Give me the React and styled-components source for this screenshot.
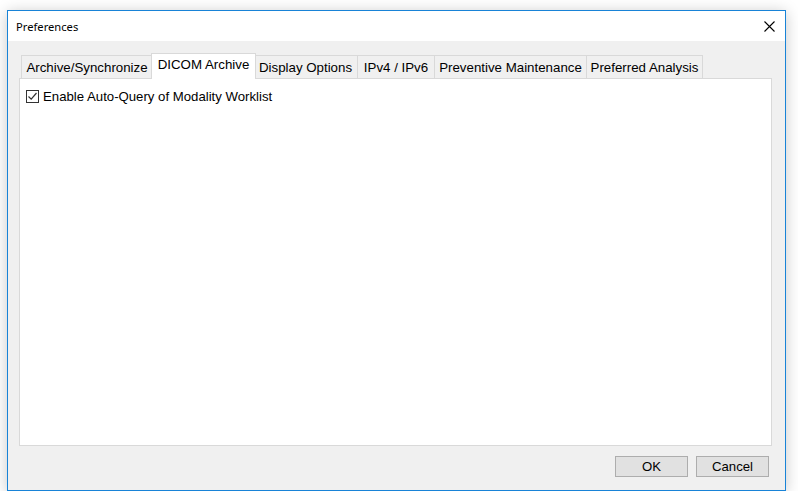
import React, { useState } from "react";
import styled, { createGlobalStyle } from "styled-components";

const GlobalStyle = createGlobalStyle`
  body {
    margin: 0;
    background: #ffffff;
    font-family: "Liberation Sans", Arial, sans-serif;
  }
`;

const Page = styled.div`
  padding: 10px 0 0 7px;
`;

const Window = styled.div`
  width: 779px;
  height: 481px;
  box-sizing: border-box;
  border: 1px solid #1883d7;
  background: #f0f0f0;
  box-shadow: 0 2px 14px rgba(0, 0, 0, 0.22);
  display: flex;
  flex-direction: column;
`;

const TitleBar = styled.div`
  height: 30px;
  background: #ffffff;
  display: flex;
  align-items: center;
  justify-content: space-between;
  padding: 0 9px 0 8px;
`;

const Title = styled.span`
  font-family: "Noto Sans", "Open Sans", sans-serif;
  font-size: 11.2px;
  color: #000;
`;

const CloseButton = styled.button`
  width: 14px;
  height: 14px;
  padding: 0;
  border: none;
  background: transparent;
  display: flex;
  align-items: center;
  justify-content: center;
`;

const Body = styled.div`
  flex: 1;
  display: flex;
  flex-direction: column;
  padding: 12px 13px 0 11px;
`;

const TabRow = styled.div`
  height: 25px;
  display: flex;
  align-items: flex-end;
  padding-left: 2px;
`;

const Tab = styled.div`
  box-sizing: border-box;
  width: ${(p) => p.$w}px;
  height: ${(p) => (p.$active ? "26px" : "23px")};
  margin: ${(p) => (p.$active ? "0 -2px -1px -2px" : "0 0 0 -1px")};
  padding-top: ${(p) => (p.$active ? "3px" : "4px")};
  border: 1px solid #d9d9d9;
  border-bottom: none;
  background: ${(p) => (p.$active ? "#ffffff" : "#f0f0f0")};
  position: relative;
  z-index: ${(p) => (p.$active ? 1 : 0)};
  font-size: 13.3px;
  line-height: 16px;
  text-align: center;
  color: #000;
  white-space: nowrap;
  &:first-child {
    margin-left: 0;
  }
`;

const Panel = styled.div`
  flex: 1;
  max-height: 368px;
  box-sizing: border-box;
  background: #ffffff;
  border: 1px solid #d9d9d9;
  padding: 10px 6px;
`;

const CheckRow = styled.label`
  display: flex;
  align-items: center;
  gap: 4px;
  font-size: 13.2px;
  color: #000;
`;

const Box = styled.span`
  width: 13px;
  height: 13px;
  box-sizing: border-box;
  border: 1px solid #333333;
  background: #ffffff;
  display: flex;
  align-items: center;
  justify-content: center;
`;

const ButtonRow = styled.div`
  display: flex;
  justify-content: flex-end;
  gap: 8px;
  padding: 10px 3px 0 0;
`;

const Button = styled.button`
  width: 73px;
  height: 21px;
  box-sizing: border-box;
  border: 1px solid #adadad;
  background: #e1e1e1;
  font-family: "Liberation Sans", Arial, sans-serif;
  font-size: 13.2px;
  color: #000;
  padding: 0;
`;

const tabs = [
  { label: "Archive/Synchronize", w: 132 },
  { label: "DICOM Archive", w: 105 },
  { label: "Display Options", w: 105 },
  { label: "IPv4 / IPv6", w: 78 },
  { label: "Preventive Maintenance", w: 153 },
  { label: "Preferred Analysis", w: 117 },
];

export default function App() {
  const [active] = useState(1);
  return (
    <>
      <GlobalStyle />
      <Page>
        <Window>
          <TitleBar>
            <Title>Preferences</Title>
            <CloseButton>
              <svg width="11" height="11" viewBox="0 0 11 11">
                <path d="M0.5 0.5 L10.5 10.5 M10.5 0.5 L0.5 10.5" stroke="#000" strokeWidth="1.1" />
              </svg>
            </CloseButton>
          </TitleBar>
          <Body>
            <TabRow>
              {tabs.map((t, i) => (
                <Tab key={t.label} $w={t.w} $active={i === active}>
                  {t.label}
                </Tab>
              ))}
            </TabRow>
            <Panel>
              <CheckRow>
                <Box>
                  <svg width="11" height="11" viewBox="0 0 11 11">
                    <path d="M1.5 5.5 L4.2 8.2 L9.5 2" fill="none" stroke="#333" strokeWidth="1.2" />
                  </svg>
                </Box>
                Enable Auto-Query of Modality Worklist
              </CheckRow>
            </Panel>
            <ButtonRow>
              <Button>OK</Button>
              <Button>Cancel</Button>
            </ButtonRow>
          </Body>
        </Window>
      </Page>
    </>
  );
}
